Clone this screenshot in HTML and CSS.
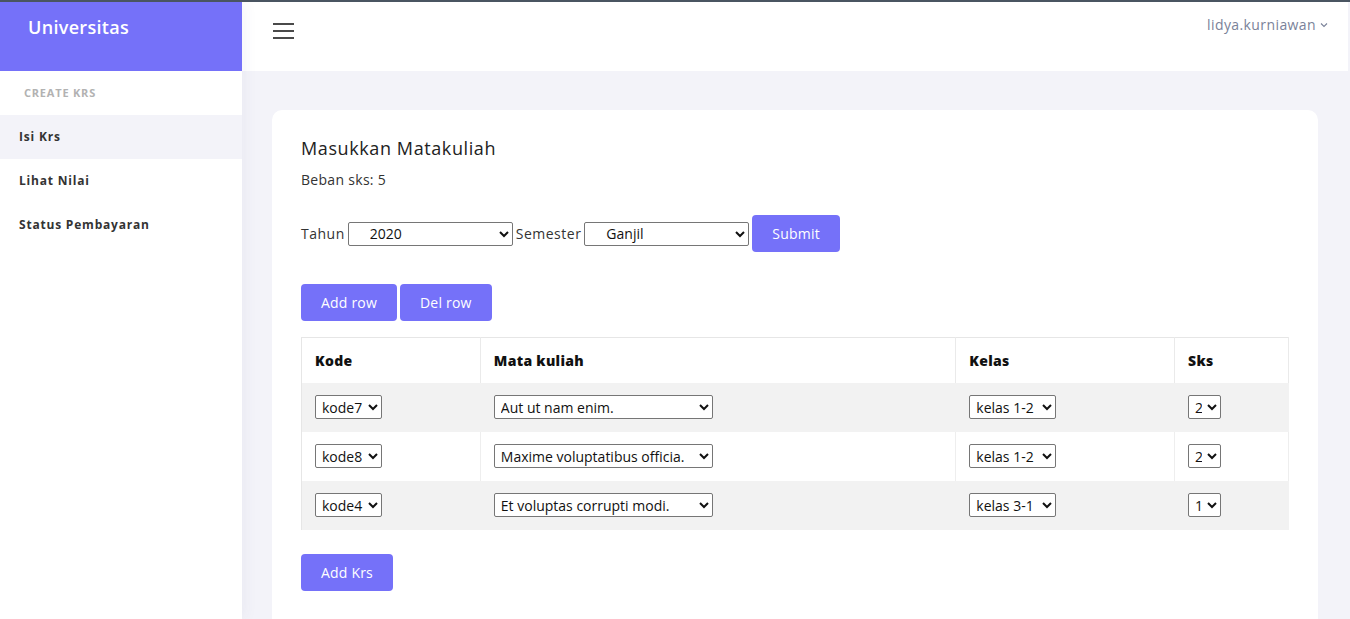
FILE: index.html
```html
<!DOCTYPE html>
<html>
<head>
<meta charset="utf-8">
<link rel="stylesheet" href="styles.css">
</head>
<body>
<div class="app">
  <aside class="sidebar">
    <div class="brand">Universitas</div>
    <div class="nav-label">CREATE KRS</div>
    <a class="nav-item active">Isi Krs</a>
    <a class="nav-item">Lihat Nilai</a>
    <a class="nav-item">Status Pembayaran</a>
  </aside>
  <div class="main">
    <header class="topbar">
      <div class="hamburger"><span></span><span></span><span></span></div>
      <div class="user">lidya.kurniawan
        <svg width="8" height="6" viewBox="0 0 8 6"><path d="M1 1.5 L4 4.5 L7 1.5" fill="none" stroke="#7a8299" stroke-width="1.1"/></svg>
      </div>
    </header>
    <div class="content">
      <div class="card">
        <h2 class="title">Masukkan Matakuliah</h2>
        <p class="beban">Beban sks: 5</p>
        <form class="filter">
          <label>Tahun</label>
          <select class="sel-wide"><option>2020</option></select>
          <label>Semester</label>
          <select class="sel-wide"><option>Ganjil</option></select>
          <button type="button" class="btn">Submit</button>
        </form>
        <div class="row-actions">
          <button type="button" class="btn">Add row</button>
          <button type="button" class="btn">Del row</button>
        </div>
        <table class="krs">
          <thead>
            <tr><th class="c1">Kode</th><th class="c2">Mata kuliah</th><th class="c3">Kelas</th><th class="c4">Sks</th></tr>
          </thead>
          <tbody>
            <tr>
              <td><select class="sel-kode"><option>kode7</option></select></td>
              <td><select class="sel-mk"><option>Aut ut nam enim.</option></select></td>
              <td><select class="sel-kelas"><option>kelas 1-2</option></select></td>
              <td><select class="sel-sks"><option>2</option></select></td>
            </tr>
            <tr>
              <td><select class="sel-kode"><option>kode8</option></select></td>
              <td><select class="sel-mk"><option>Maxime voluptatibus officia.</option></select></td>
              <td><select class="sel-kelas"><option>kelas 1-2</option></select></td>
              <td><select class="sel-sks"><option>2</option></select></td>
            </tr>
            <tr>
              <td><select class="sel-kode"><option>kode4</option></select></td>
              <td><select class="sel-mk"><option>Et voluptas corrupti modi.</option></select></td>
              <td><select class="sel-kelas"><option>kelas 3-1</option></select></td>
              <td><select class="sel-sks"><option>1</option></select></td>
            </tr>
          </tbody>
        </table>
        <button type="button" class="btn">Add Krs</button>
      </div>
    </div>
  </div>
</div>
</body>
</html>
```
FILE: styles.css
```css
* { box-sizing: border-box; }
html, body { margin: 0; padding: 0; height: 100%; }
body {
  font-family: "Open Sans", "Noto Sans", sans-serif;
  color: #222;
  background: #f3f3f9;
  border-top: 2px solid #4a5561;
  overflow: hidden;
}
.app { display: flex; height: 617px; overflow: hidden; }
.sidebar {
  width: 242px;
  flex: 0 0 242px;
  background: #fff;
  box-shadow: 2px 0 14px rgba(60, 60, 120, 0.06);
  position: relative;
  z-index: 1;
}
.brand {
  height: 69px;
  background: #7571f9;
  color: #fff;
  font-size: 18px;
  font-weight: 600;
  padding: 13px 0 0 28px;
  line-height: 24px;
  letter-spacing: 0.3px;
}
.nav-label {
  height: 44px;
  padding-left: 24px;
  font-size: 11px;
  font-weight: 700;
  color: #b2b2b2;
  letter-spacing: 0.8px;
  line-height: 44px;
}
.nav-item {
  display: block;
  height: 44px;
  line-height: 44px;
  padding-left: 19px;
  font-size: 12px;
  font-weight: 700;
  color: #333;
  letter-spacing: 0.8px;
}
.nav-item.active { background: #f3f3f9; }
.main { flex: 1; display: flex; flex-direction: column; min-width: 0; overflow: hidden; }
.topbar {
  flex: 0 0 69px;
  height: 69px;
  background: #fff;
  margin-right: 2px;
  display: flex;
  justify-content: space-between;
  align-items: flex-start;
  padding: 0 20px 0 31px;
}
.hamburger {
  margin-top: 21px;
  width: 21px;
  display: flex;
  flex-direction: column;
  gap: 5px;
}
.hamburger span { display: block; height: 2px; background: #4a4a4a; }
.user {
  margin-top: 13px;
  font-size: 14px;
  color: #7a8299;
  display: flex;
  align-items: center;
  gap: 4px;
  letter-spacing: 0.4px;
}
.content { padding: 39px 32px 0 30px; flex: 1 0 auto; }
.card {
  background: #fff;
  border-radius: 10px;
  padding: 27px 29px 40px 29px;
}
.title {
  margin: 0;
  font-size: 18px;
  font-weight: 500;
  line-height: 22px;
  color: #222;
  letter-spacing: 0.6px;
}
.beban { margin: 11px 0 0; font-size: 14px; line-height: 20px; color: #333; letter-spacing: 0.3px; }
.filter {
  margin-top: 25px;
  display: flex;
  align-items: center;
  font-size: 14px;
  color: #333;
}
.filter label { margin-right: 3px; letter-spacing: 0.5px; }
.filter select { margin-right: 3px; }
select {
  font-family: "Open Sans", "Noto Sans", sans-serif;
  font-size: 14px;
  height: 24px;
  border: 1px solid #767676;
  border-radius: 2px;
  background: #fff;
  color: #111;
  padding: 0 2px;
}
.sel-wide { width: 165px; padding-left: 17px; }
.sel-kode { width: 67px; }
.sel-mk { width: 219px; }
.sel-kelas { width: 87px; }
.sel-sks { width: 33px; }
.btn {
  font-family: "Open Sans", "Noto Sans", sans-serif;
  background: #7571f9;
  color: #fff;
  border: none;
  border-radius: 4px;
  height: 37px;
  padding: 0 20px;
  font-size: 14px;
  cursor: pointer;
  letter-spacing: 0.2px;
}
.row-actions { margin-top: 32px; display: flex; gap: 3px; }
.krs {
  margin-top: 16px;
  margin-bottom: 24px;
  width: 988px;
  border-collapse: collapse;
  border-top: 1px solid #e6e6e6;
  border-left: 1px solid #e6e6e6;
  font-size: 14px;
}
.krs th {
  text-align: left;
  font-weight: 800;
  height: 45px;
  padding: 0 13px;
  border-right: 1px solid #eaeaea;
  color: #111;
  letter-spacing: 0.3px;
}
.krs td {
  height: 49px;
  padding: 0 13px;
  border-right: 1px solid #eeeeee;
  vertical-align: middle;
}
.krs tbody tr:nth-child(odd) td { background: #f2f2f2; border-right-color: #f2f2f2; }
.c1 { width: 179px; }
.c2 { width: 476px; }
.c3 { width: 219px; }
.c4 { width: 114px; }
```
